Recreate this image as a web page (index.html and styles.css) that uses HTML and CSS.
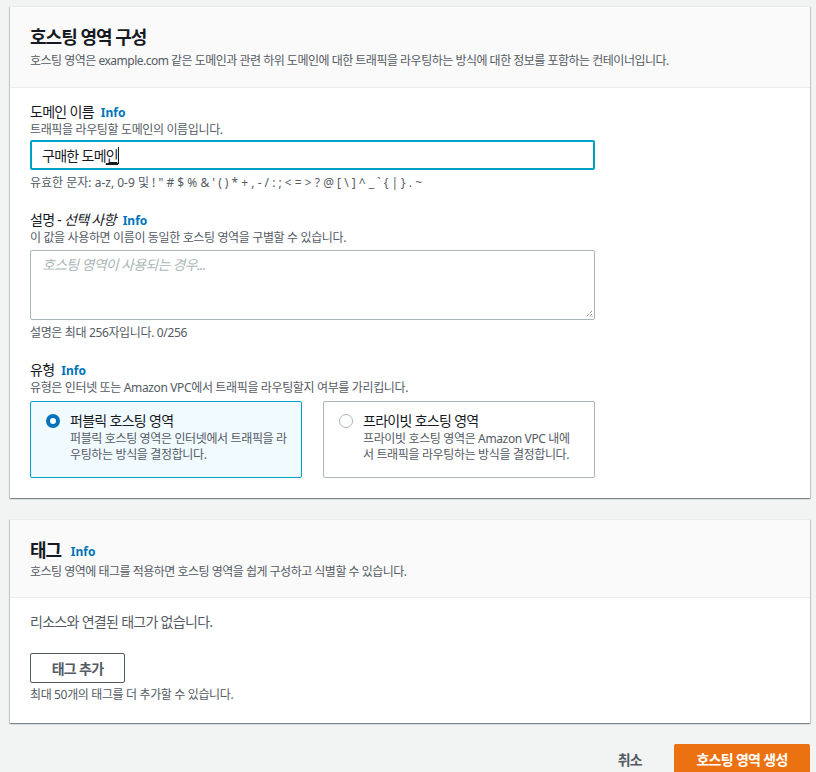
FILE: index.html
```html
<!DOCTYPE html>
<html lang="ko">
<head>
<meta charset="utf-8">
<link rel="stylesheet" href="styles.css">
</head>
<body>
<div class="page">
  <section class="card">
    <header class="card-head">
      <h2 class="card-title">호스팅 영역 구성</h2>
      <p class="card-desc">호스팅 영역은 example.com 같은 도메인과 관련 하위 도메인에 대한 트래픽을 라우팅하는 방식에 대한 정보를 포함하는 컨테이너입니다.</p>
    </header>
    <div class="card-body">
      <div class="field">
        <div class="label">도메인 이름 <a class="info">Info</a></div>
        <div class="hint">트래픽을 라우팅할 도메인의 이름입니다.</div>
        <div class="input focused"><span>구매한 도메<u class="ime">인</u></span><span class="caret"></span></div>
        <div class="constraint latin">유효한 문자: a-z, 0-9 및 ! " # $ % &amp; ' ( ) * + , - / : ; &lt; = &gt; ? @ [ \ ] ^ _ ` { | } . ~</div>
      </div>
      <div class="field">
        <div class="label">설명 - <i>선택 사항</i> <a class="info">Info</a></div>
        <div class="hint">이 값을 사용하면 이름이 동일한 호스팅 영역을 구별할 수 있습니다.</div>
        <div class="textarea"><span class="placeholder">호스팅 영역이 사용되는 경우...</span>
          <svg class="grip" width="8" height="8" viewBox="0 0 8 8"><path d="M7 1L1 7M7 4L4 7M7 6.5L6.5 7" stroke="#5f6b6b" stroke-width="1" stroke-dasharray="1 1" fill="none"/></svg>
        </div>
        <div class="constraint">설명은 최대 256자입니다. 0/256</div>
      </div>
      <div class="field last">
        <div class="label">유형 <a class="info">Info</a></div>
        <div class="hint">유형은 인터넷 또는 Amazon VPC에서 트래픽을 라우팅할지 여부를 가리킵니다.</div>
        <div class="tiles">
          <div class="tile selected">
            <span class="radio on"></span>
            <div class="tile-text">
              <div class="tile-title">퍼블릭 호스팅 영역</div>
              <div class="tile-desc">퍼블릭 호스팅 영역은 인터넷에서 트래픽을 라<br>우팅하는 방식을 결정합니다.</div>
            </div>
          </div>
          <div class="tile">
            <span class="radio"></span>
            <div class="tile-text">
              <div class="tile-title">프라이빗 호스팅 영역</div>
              <div class="tile-desc">프라이빗 호스팅 영역은 Amazon VPC 내에<br>서 트래픽을 라우팅하는 방식을 결정합니다.</div>
            </div>
          </div>
        </div>
      </div>
    </div>
  </section>

  <section class="card">
    <header class="card-head tags-head">
      <h2 class="card-title">태그 <a class="info">Info</a></h2>
      <p class="card-desc">호스팅 영역에 태그를 적용하면 호스팅 영역을 쉽게 구성하고 식별할 수 있습니다.</p>
    </header>
    <div class="card-body tags-body">
      <p class="empty">리소스와 연결된 태그가 없습니다.</p>
      <button class="btn">태그 추가</button>
      <div class="constraint">최대 50개의 태그를 더 추가할 수 있습니다.</div>
    </div>
  </section>

  <div class="actions">
    <button class="link-btn">취소</button>
    <button class="btn-primary">호스팅 영역 생성</button>
  </div>
</div>
</body>
</html>
```

FILE: styles.css
```css
* { box-sizing: border-box; }
html, body { margin: 0; padding: 0; }
body {
  background: #f2f3f3;
  font-family: "Noto Sans", "Noto Sans CJK KR", sans-serif;
  color: #16191f;
  font-size: 14px;
  letter-spacing: -0.05em;
  overflow: hidden;
  height: 772px;
}
.page {
  padding: 6px 6px 0 10px;
  display: flex;
  flex-direction: column;
  gap: 21px;
}
.card {
  background: #fff;
  border-top: 1px solid #eaeded;
  box-shadow: 0 1px 1px 0 rgba(0,28,36,.3), 1px 1px 1px 0 rgba(0,28,36,.15), -1px 1px 1px 0 rgba(0,28,36,.15);
}
.card-head {
  background: #fafafa;
  border-bottom: 1px solid #eaeded;
  padding: 19px 20px 18px;
}
.card-title {
  margin: 0;
  font-size: 18px;
  line-height: 22px;
  font-weight: 700;
  letter-spacing: -0.055em;
}
.card-desc {
  margin: 5px 0 0;
  font-size: 12px;
  line-height: 16px;
  color: #545b64;
  letter-spacing: -0.042em;
}
.card-body {
  padding: 14px 20px 20px;
}
.field { width: 565px; margin-bottom: 19px; }
.field.last { margin-bottom: 0; }
.label {
  font-size: 14px;
  line-height: 20px;
}
.label i { font-style: italic; }
.info {
  color: #0073bb;
  font-weight: 700;
  font-size: 12px;
  margin-left: 4px;
  letter-spacing: 0;
}
.card-title .info { margin-left: 6px; vertical-align: 1px; }
.hint {
  margin-top: -1px;
  font-size: 12px;
  line-height: 16px;
  color: #545b64;
  letter-spacing: -0.03em;
}
.input {
  margin-top: 2px;
  height: 30px;
  border: 2px solid #00a1c9;
  border-radius: 2px;
  padding: 0 10px;
  display: flex;
  align-items: center;
  font-size: 14px;
}
.ime { text-decoration: underline; text-decoration-thickness: 2px; text-underline-offset: 2px; }
.caret { display: inline-block; width: 1px; height: 17px; background: #16191f; }
.constraint {
  margin-top: 5px;
  font-size: 12px;
  line-height: 16px;
  color: #545b64;
  letter-spacing: -0.03em;
}
.constraint.latin { letter-spacing: 0; }
.textarea {
  position: relative;
  margin-top: 4px;
  height: 70px;
  border: 1px solid #aab7b8;
  border-radius: 2px;
  padding: 4px 11px;
}
.placeholder {
  color: #aab7b8;
  font-style: italic;
  font-size: 14px;
  line-height: 20px;
}
.grip { position: absolute; right: 1px; bottom: 1px; }
.tiles {
  margin-top: 5px;
  display: grid;
  grid-template-columns: 1fr 1fr;
  gap: 21px;
}
.tile {
  height: 77px;
  border: 1px solid #aab7b8;
  border-radius: 2px;
  padding: 9px 10px 12px 15px;
  display: flex;
  gap: 10px;
}
.tile.selected {
  background: #f1faff;
  border-color: #00a1c9;
}
.radio {
  flex: none;
  width: 14px;
  height: 14px;
  margin-top: 3px;
  border-radius: 50%;
  border: 1px solid #aab7b8;
  background: #fff;
}
.radio.on {
  border: 4px solid #0073bb;
}
.tile-title { font-size: 14px; line-height: 20px; }
.tile-desc { font-size: 12px; line-height: 16px; color: #545b64; letter-spacing: -0.03em; white-space: nowrap; }
.tags-head { padding: 19px 20px 17px; }
.tags-head .card-desc { margin-top: 1px; }
.tags-body { padding: 14px 20px 20px; }
.empty {
  margin: 0;
  font-size: 14px;
  line-height: 20px;
  color: #545b64;
}
.btn {
  margin-top: 21px;
  height: 30px;
  width: 95px;
  border: 1px solid #545b64;
  border-radius: 2px;
  background: #fff;
  font-family: inherit;
  font-size: 14px;
  font-weight: 700;
  letter-spacing: inherit;
  color: #545b64;
  padding: 0;
}
.tags-body .constraint { margin-top: 4px; }
.actions {
  display: flex;
  justify-content: flex-end;
  align-items: center;
  gap: 18px;
}
.link-btn {
  border: 0;
  background: none;
  font-family: inherit;
  font-size: 14px;
  font-weight: 700;
  letter-spacing: inherit;
  color: #545b64;
  padding: 0 14px;
}
.btn-primary {
  height: 30px;
  width: 136px;
  border: 0;
  border-radius: 2px;
  background: #ec7211;
  color: #fff;
  font-family: inherit;
  font-size: 14px;
  font-weight: 700;
  letter-spacing: inherit;
  padding: 0;
}
```
